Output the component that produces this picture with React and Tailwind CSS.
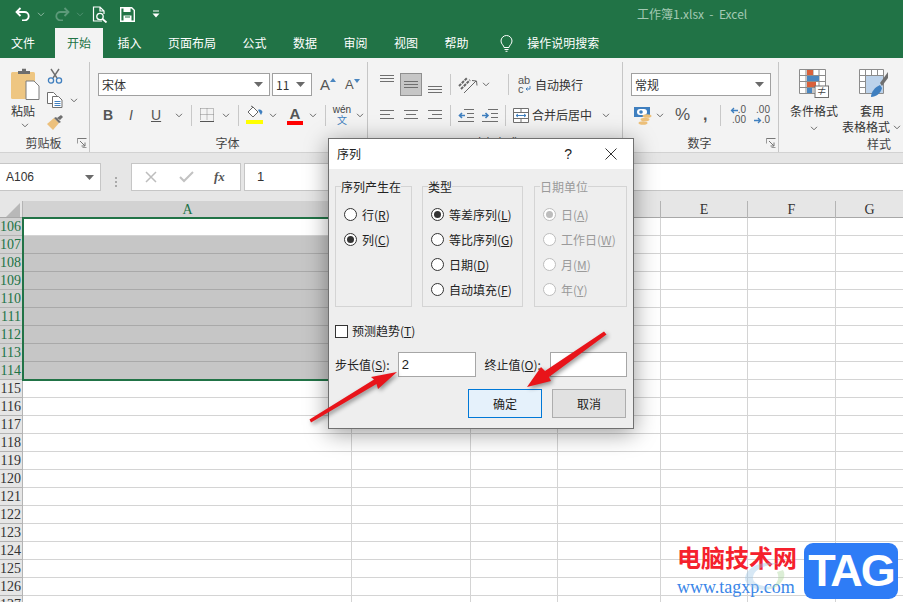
import React from 'react';

const CJK = '"Noto Sans CJK SC", "Noto Sans", sans-serif';

const tabs = ['插入', '页面布局', '公式', '数据', '审阅', '视图', '帮助'];
const rows = Array.from({ length: 22 }, (_, i) => 106 + i);

const Chevron = ({ color = '#6a6a6a' }) => (
  <svg width="8" height="5" viewBox="0 0 8 5" className="shrink-0">
    <path d="M1 .8l3 3 3-3" fill="none" stroke={color} />
  </svg>
);

const Caret = () => (
  <svg width="9" height="5" viewBox="0 0 9 5" className="shrink-0">
    <path d="M0 0h9L4.5 5z" fill="#6a6a6a" />
  </svg>
);

const Sep = () => <div className="h-[21px] w-px shrink-0 bg-[#c8c8c8]" />;

const Launcher = () => (
  <svg width="10" height="10" viewBox="0 0 10 10" className="justify-self-end">
    <path d="M.5 5V.5H9.5M3 3l5 5M8 4.5V8H4.5" fill="none" stroke="#777" />
    <path d="M.5 .5v9h9" fill="none" stroke="#999" strokeDasharray="5 9" />
  </svg>
);

// stacked alignment lines, each entry is [x1, x2, y]
const Lines = ({ w = 15, h = 10, items, color = '#6f6f6f' }) => (
  <svg width={w} height={h} viewBox={`0 0 ${w} ${h}`} className="shrink-0">
    {items.map(([a, b, y]) => (
      <path key={`${a}${y}`} d={`M${a} ${y}H${b}`} stroke={color} />
    ))}
  </svg>
);

const threeEven = [[0, 14, 0.5], [0, 14, 3.5], [0, 14, 6.5]];

const Group = ({ label, launcher, className, children }) => (
  <div className={`flex h-full shrink-0 flex-col border-r border-[#c6c6c6] ${className}`}>
    <div className="flex-1">{children}</div>
    <div className="grid h-[18px] grid-cols-[1fr_auto_1fr] items-center pr-[2px] text-[12px] text-[#444]">
      <span />
      <span>{label}</span>
      {launcher ? <Launcher /> : <span />}
    </div>
  </div>
);

const Combo = ({ className, children }) => (
  <div className={`flex h-[23px] items-center justify-between border border-[#a0a0a0] bg-white px-[3px] pr-[6px] text-[12px] text-[#333] ${className}`}>
    <span>{children}</span>
    <Caret />
  </div>
);

const Radio = ({ label, keyChar, checked, disabled }) => (
  <div className={`flex h-[25px] items-center gap-[5px] text-[12px] ${disabled ? 'text-[#9a9a9a]' : 'text-[#222]'}`}>
    <span className={`flex h-[13px] w-[13px] items-center justify-center rounded-full border bg-white ${disabled ? 'border-[#bdbdbd]' : 'border-[#333]'}`}>
      {checked && <span className={`h-[7px] w-[7px] rounded-full ${disabled ? 'bg-[#bdbdbd]' : 'bg-[#333]'}`} />}
    </span>
    <span>
      {label}(<u>{keyChar}</u>)
    </span>
  </div>
);

const Box = ({ title, disabled, className, children }) => (
  <fieldset className={`h-[129px] shrink-0 border border-[#d4d4d4] pl-[8px] ${className}`}>
    <legend className={`ml-[-3px] px-0 text-[12px] leading-[17px] ${disabled ? 'text-[#9a9a9a]' : 'text-[#222]'}`}>{title}</legend>
    <div className="pt-[7px]">{children}</div>
  </fieldset>
);

const Dialog = () => (
  <div className="absolute left-[328px] top-[138px] z-20 h-[291px] w-[306px] border border-[#707070] bg-[#eeeeee] shadow-[0_4px_22px_rgba(0,0,0,0.4)]">
    <div className="flex h-[30px] items-center justify-between bg-white pl-[8px] pr-[16px] text-[12px] text-[#222]">
      <span>序列</span>
      <div className="flex items-center gap-[33px]">
        <span className="font-['Liberation_Sans'] text-[14px]">?</span>
        <svg width="12" height="12" viewBox="0 0 12 12">
          <path d="M.5 .5l11 11M11.5 .5l-11 11" stroke="#333" fill="none" />
        </svg>
      </div>
    </div>
    <div className="px-[6px] pt-[9px]">
      <div className="flex gap-[10px]">
        <Box title="序列产生在" className="w-[77px]">
          <Radio label="行" keyChar="R" />
          <Radio label="列" keyChar="C" checked />
        </Box>
        <Box title="类型" className="w-[101px]">
          <Radio label="等差序列" keyChar="L" checked />
          <Radio label="等比序列" keyChar="G" />
          <Radio label="日期" keyChar="D" />
          <Radio label="自动填充" keyChar="F" />
        </Box>
        <Box title="日期单位" disabled className="ml-[1px] w-[93px]">
          <Radio label="日" keyChar="A" checked disabled />
          <Radio label="工作日" keyChar="W" disabled />
          <Radio label="月" keyChar="M" disabled />
          <Radio label="年" keyChar="Y" disabled />
        </Box>
      </div>
      <div className="mt-[17px] flex h-[14px] items-center gap-[4px] text-[12px] text-[#222]">
        <span className="h-[13px] w-[13px] border border-[#333] bg-white" />
        <span>
          预测趋势(<u>T</u>)
        </span>
      </div>
      <div className="mt-[14px] flex h-[25px] items-center text-[12px] text-[#222]">
        <span className="w-[63px]">
          步长值(<u>S</u>):
        </span>
        <div className="flex h-[25px] w-[78px] items-center border border-[#a6a6a6] bg-white pl-[3px] font-['Liberation_Sans'] text-[13px]">2</div>
        <span className="ml-[9px] w-[66px]">
          终止值(<u>O</u>):
        </span>
        <div className="h-[25px] w-[77px] border border-[#a6a6a6] bg-white" />
      </div>
      <div className="mt-[12px] flex justify-end gap-[10px] pr-[1px]">
        <button className="h-[29px] w-[74px] border border-[#0078d7] bg-[#e5f1fb] text-[12px] text-[#222]">确定</button>
        <button className="h-[29px] w-[74px] border border-[#adadad] bg-[#e1e1e1] text-[12px] text-[#222]">取消</button>
      </div>
    </div>
  </div>
);

const TitleBar = () => (
  <div className="flex h-[28px] shrink-0 items-center bg-[#217346] pl-[15px]">
    <svg width="16" height="14" viewBox="0 0 16 14" className="shrink-0">
      <path d="M5.5 1L1.5 5l4 4M2 5h7.5a4.2 4.2 0 0 1 0 8.4H7" fill="none" stroke="#fff" strokeWidth="1.8" />
    </svg>
    <div className="ml-[6px]"><Chevron color="#8fb8a2" /></div>
    <svg width="16" height="14" viewBox="0 0 16 14" className="ml-[9px] shrink-0">
      <path d="M10.5 1l4 4-4 4M14 5H6.5a4.2 4.2 0 0 0 0 8.4H9" fill="none" stroke="#5d9a7a" strokeWidth="1.8" />
    </svg>
    <div className="ml-[6px]"><Chevron color="#4f9070" /></div>
    <svg width="16" height="17" viewBox="0 0 16 17" className="ml-[8px] shrink-0">
      <path d="M10 15H1.5V1H8l4 4v3M8 1v4h4" fill="none" stroke="#fff" strokeWidth="1.2" />
      <circle cx="8" cy="10.5" r="3.2" fill="none" stroke="#fff" strokeWidth="1.3" />
      <path d="M10.5 13l4 3.5" stroke="#fff" strokeWidth="1.8" />
    </svg>
    <svg width="15" height="15" viewBox="0 0 15 15" className="ml-[12px] shrink-0">
      <path d="M.7 .7h11l2.6 2.6v11H.7z" fill="none" stroke="#fff" strokeWidth="1.4" />
      <path d="M3.5 1h7v4h-7zM3.5 8.5h8V14h-8z" fill="#fff" />
      <path d="M5 10h5" stroke="#217346" />
    </svg>
    <svg width="8" height="8" viewBox="0 0 8 8" className="ml-[17px] shrink-0">
      <path d="M1 1h6" stroke="#fff" />
      <path d="M.5 3.5h7L4 7.5z" fill="#fff" />
    </svg>
    <span className="ml-[477px] whitespace-pre text-[12px] text-[#a3c9b3]">工作簿1.xlsx  -  Excel</span>
  </div>
);

const TabBar = () => (
  <div className="flex h-[30px] shrink-0 items-stretch gap-[2.5px] bg-[#217346] text-[12px] text-white">
    <div className="flex w-[52.5px] items-center pl-[11px]">文件</div>
    <div className="flex items-center bg-[#f3f3f3] px-[12px] text-[#217346]">开始</div>
    {tabs.map((t) => (
      <div key={t} className="flex items-center px-[12px]">{t}</div>
    ))}
    <div className="ml-[17px] flex items-center gap-[14px]">
      <svg width="13" height="17" viewBox="0 0 13 17" className="shrink-0">
        <path d="M4 12.5c0-2-3-3.3-3-6.5a5.5 5.5 0 0 1 11 0c0 3.2-3 4.5-3 6.5zM4.5 14.5h4M5.5 16.3h2" fill="none" stroke="#fff" />
      </svg>
      <span>操作说明搜索</span>
    </div>
  </div>
);

const ClipboardGroup = () => (
  <Group label="剪贴板" launcher className="w-[90px]">
    <div className="flex pl-[11px] pt-[6px]">
      <div className="flex w-[33px] shrink-0 flex-col">
        <svg width="29" height="32" viewBox="0 0 29 32">
          <rect x="0" y="4" width="24" height="27" rx="1.5" fill="#eec682" />
          <path d="M7 6V3h4V0.8h4V3h4v3z" fill="#6e6e6e" />
          <path d="M15 13h8l5 5v13.5H15z" fill="#fff" stroke="#7c7c7c" />
        </svg>
        <span className="mt-[2px] text-[12px] text-[#333]">粘贴</span>
        <div className="ml-[10px] mt-[3px]"><Chevron /></div>
      </div>
      <div className="ml-[3px] flex flex-col">
        <svg width="16" height="16" viewBox="0 0 16 16">
          <path d="M4 1l6 9M12 1l-6 9" stroke="#6f6f6f" strokeWidth="1.4" fill="none" />
          <circle cx="4" cy="12.5" r="2.6" fill="none" stroke="#3f7fbf" strokeWidth="1.3" />
          <circle cx="12" cy="12.5" r="2.6" fill="none" stroke="#3f7fbf" strokeWidth="1.3" />
        </svg>
        <div className="mt-[8px] flex items-center gap-[7px]">
          <svg width="16" height="16" viewBox="0 0 16 16">
            <path d="M.5 .5h6l3 3v8h-9z" fill="#fff" stroke="#6f6f6f" />
            <path d="M5.5 4.5h6l3.5 3.5v7.5H5.5z" fill="#fff" stroke="#6f6f6f" />
            <path d="M7.5 9.5h6M7.5 11.5h6M7.5 13.5h6" stroke="#3f7fbf" />
          </svg>
          <Chevron />
        </div>
        <svg width="16" height="15" viewBox="0 0 16 15" className="mt-[7px]">
          <path d="M0 9l7-6 5 5-6 7z" fill="#ecc07c" />
          <path d="M7 3l2-1 5 5-2 1zM10 3l4-3 2 2-3 3z" fill="#6f6f6f" />
        </svg>
      </div>
    </div>
  </Group>
);

const FontGroup = () => (
  <Group label="字体" className="w-[278px]">
    <div className="pl-[8px] pt-[11px]">
      <div className="flex items-center">
        <Combo className="w-[172px]">宋体</Combo>
        <Combo className="ml-[2px] w-[40px]">11</Combo>
        <div className="ml-[8px] flex w-[15px] items-start font-['Liberation_Sans'] text-[15px] leading-none text-[#555]">
          A
          <svg width="6" height="4" viewBox="0 0 6 4" className="mt-[1px] shrink-0"><path d="M0 4h6L3 0z" fill="#4a86c0" /></svg>
        </div>
        <div className="ml-[10px] flex w-[15px] items-start font-['Liberation_Sans'] text-[13px] leading-none text-[#555]">
          A
          <svg width="6" height="4" viewBox="0 0 6 4" className="mt-[1px] shrink-0"><path d="M0 0h6L3 4z" fill="#4a86c0" /></svg>
        </div>
      </div>
      <div className="mt-[8px] flex h-[22px] items-center font-['Liberation_Sans'] text-[14px] text-[#555]">
        <span className="ml-[5px] w-[24px] font-bold">B</span>
        <span className="w-[24px] pl-[2px] italic">I</span>
        <span className="w-[24px] underline">U</span>
        <Chevron />
        <div className="ml-[8px]"><Sep /></div>
        <svg width="14" height="14" viewBox="0 0 14 14" className="ml-[8px] shrink-0">
          <path d="M.5 .5h13v12M.5 .5v12M7 .5v12M.5 6.5h13" fill="none" stroke="#888" strokeDasharray="1 1" />
          <path d="M0 13.5h14" stroke="#555" />
        </svg>
        <div className="ml-[8px]"><Chevron /></div>
        <div className="ml-[8px]"><Sep /></div>
        <svg width="17" height="20" viewBox="0 0 17 20" className="ml-[7px] shrink-0">
          <path d="M2 7l5-5 5 5-5 5z" fill="#fff" stroke="#666" />
          <path d="M5 1l2 1" stroke="#666" />
          <path d="M12 5c2-1 4 0 4.5 2L15 10c-1-2-2-3-3-5z" fill="#3f7fbf" />
          <rect x="0" y="15" width="17" height="4" fill="#ffff00" />
        </svg>
        <div className="ml-[6px]"><Chevron /></div>
        <div className="ml-[10px] flex w-[16px] flex-col items-center">
          <span className="text-[15px] font-bold leading-[15px]">A</span>
          <span className="h-[4px] w-[16px] bg-[#ff0000]" />
        </div>
        <div className="ml-[6px]"><Chevron /></div>
        <div className="ml-[8px]"><Sep /></div>
        <div className="ml-[8px] flex w-[16px] flex-col items-center text-[10px] leading-[10px] text-[#444]">
          <span>wén</span>
          <span className="text-[#3f7fbf]" style={{ fontFamily: CJK }}>文</span>
        </div>
        <div className="ml-[6px]"><Chevron /></div>
      </div>
    </div>
  </Group>
);

const AlignGroup = () => (
  <Group label="对齐方式" className="w-[255px]">
    <div className="pl-[12px] pt-[11px]">
      <div className="flex h-[23px] items-center">
        <div className="mb-[11px]"><Lines w={15} h={8} items={threeEven} /></div>
        <div className="ml-[5px] flex h-[23px] w-[22px] items-center justify-center border border-[#8f8f8f] bg-[#c6c6c6]">
          <Lines w={15} h={8} items={threeEven} />
        </div>
        <div className="ml-[6px] mt-[11px]"><Lines w={15} h={8} items={threeEven} /></div>
        <div className="ml-[7px]"><Sep /></div>
        <svg width="20" height="20" viewBox="0 0 20 20" className="ml-[7px] shrink-0">
          <path d="M1 11l8-8M3 14l9-9" stroke="#666" strokeWidth="2" fill="none" strokeDasharray="3 1" />
          <path d="M6 18L18 6M14 5.5l4.5.5.5 4.5" stroke="#666" fill="none" />
        </svg>
        <div className="ml-[4px]"><Chevron /></div>
        <div className="ml-[18px]"><Sep /></div>
        <div className="ml-[9px] flex w-[13px] flex-col font-['Liberation_Sans'] text-[11px] leading-[9px] text-[#555]">
          <span>ab</span>
          <span className="flex items-center">
            c
            <svg width="6" height="6" viewBox="0 0 6 6" className="ml-[1px]"><path d="M5 0v3H1M2.5 1.5L1 3l1.5 1.5" fill="none" stroke="#3f7fbf" /></svg>
          </span>
        </div>
        <span className="ml-[4px] text-[12px] text-[#333]">自动换行</span>
      </div>
      <div className="mt-[8px] flex h-[22px] items-center">
        <Lines w={15} h={10} items={[[0, 14, 0.5], [0, 10, 4.5], [0, 14, 8.5]]} />
        <div className="ml-[9px]"><Lines w={15} h={10} items={[[0, 14, 0.5], [2, 12, 4.5], [0, 14, 8.5]]} /></div>
        <div className="ml-[9px]"><Lines w={15} h={10} items={[[0, 14, 0.5], [4, 14, 4.5], [0, 14, 8.5]]} /></div>
        <div className="ml-[7px]"><Sep /></div>
        <svg width="16" height="13" viewBox="0 0 16 13" className="ml-[7px] shrink-0">
          <path d="M6 .5h10M9 4.5h7M9 8.5h7M0 12.5h16" stroke="#6f6f6f" />
          <path d="M7 6.5H2M4 4L1.5 6.5 4 9" fill="none" stroke="#3f7fbf" strokeWidth="1.6" />
        </svg>
        <svg width="16" height="13" viewBox="0 0 16 13" className="ml-[8px] shrink-0">
          <path d="M6 .5h10M9 4.5h7M9 8.5h7M0 12.5h16" stroke="#6f6f6f" />
          <path d="M0 6.5h5M3.5 4L6 6.5 3.5 9" fill="none" stroke="#3f7fbf" strokeWidth="1.6" />
        </svg>
        <div className="ml-[7px]"><Sep /></div>
        <svg width="16" height="15" viewBox="0 0 16 15" className="ml-[7px] shrink-0">
          <path d="M.5 .5h15v14H.5zM.5 4.5h15M.5 10.5h15M8 .5v4M8 10.5v4" fill="#fff" stroke="#6f6f6f" />
          <path d="M3 7.5h10M5 6l-2 1.5L5 9M11 6l2 1.5L11 9" fill="none" stroke="#3f7fbf" />
        </svg>
        <span className="ml-[3px] text-[12px] text-[#333]">合并后居中</span>
        <div className="ml-[10px]"><Chevron /></div>
      </div>
    </div>
  </Group>
);

const NumberGroup = () => (
  <Group label="数字" launcher className="w-[156px]">
    <div className="pl-[8px] pt-[11px]">
      <Combo className="w-[140px]">常规</Combo>
      <div className="mt-[8px] flex h-[22px] items-center text-[#555]">
        <svg width="18" height="19" viewBox="0 0 18 19" className="ml-[3px] shrink-0">
          <rect x="0" y="1" width="16" height="10" fill="#3f7fbf" />
          <rect x="3" y="3" width="10" height="6" rx="3" fill="#fff" />
          <circle cx="7" cy="6" r="1.8" fill="#3f7fbf" />
          <ellipse cx="13" cy="10" rx="4.5" ry="1.8" fill="#edc07a" />
          <ellipse cx="11" cy="13.5" rx="4.5" ry="1.8" fill="#edc07a" />
          <ellipse cx="9" cy="17" rx="4.5" ry="1.8" fill="#edc07a" />
        </svg>
        <div className="ml-[4px]"><Chevron /></div>
        <span className="ml-[11px] w-[28px] font-['Liberation_Sans'] text-[17px]">%</span>
        <span className="w-[17px] font-['Liberation_Sans'] text-[16px] font-bold leading-none">,</span>
        <Sep />
        <div className="ml-[7px] flex w-[18px] flex-col items-end font-['Liberation_Sans'] text-[10px] leading-[10px] text-[#555]">
          <span className="flex items-center">
            <svg width="8" height="7" viewBox="0 0 8 7"><path d="M8 3.5H2M4 1L1.5 3.5 4 6" fill="none" stroke="#3f7fbf" strokeWidth="1.3" /></svg>
            .0
          </span>
          <span>.00</span>
        </div>
        <div className="ml-[7px] flex w-[17px] flex-col items-end font-['Liberation_Sans'] text-[10px] leading-[10px] text-[#555]">
          <span>.00</span>
          <span className="flex items-center">
            <svg width="8" height="7" viewBox="0 0 8 7"><path d="M0 3.5h6M4 1l2.5 2.5L4 6" fill="none" stroke="#3f7fbf" strokeWidth="1.3" /></svg>
            .0
          </span>
        </div>
      </div>
    </div>
  </Group>
);

const StylesGroup = () => (
  <div className="flex h-full flex-1 flex-col">
    <div className="flex flex-1 pt-[7px] text-[12px] leading-[16px] text-[#333]">
      <div className="ml-[10px] flex w-[50px] flex-col items-center">
        <svg width="30" height="29" viewBox="0 0 30 29">
          <path d="M.5 .5h26v24H.5zM.5 6.5h26M.5 12.5h26M.5 18.5h26M7 .5v24M14 .5v24M20 .5v24" fill="#fff" stroke="#8c8c8c" />
          <rect x="8" y="1" width="6" height="5" fill="#d9603a" />
          <rect x="8" y="7" width="12" height="5" fill="#4a86c0" />
          <rect x="8" y="13" width="9" height="5" fill="#d9603a" />
          <rect x="8" y="19" width="5" height="5" fill="#4a86c0" />
          <rect x="16" y="17" width="13.5" height="11.5" fill="#fff" stroke="#6f6f6f" />
          <text x="22.7" y="26" fontSize="10" textAnchor="middle" fill="#444">≠</text>
        </svg>
        <span className="mt-[5px]">条件格式</span>
        <div className="mt-[7px]"><Chevron /></div>
      </div>
      <div className="ml-[3px] flex w-[52px] flex-col">
        <svg width="30" height="29" viewBox="0 0 30 29" className="ml-[17px] shrink-0">
          <path d="M.5 .5h24v24H.5zM.5 6.5h24M.5 12.5h24M.5 18.5h24M6.5 .5v24M12.5 .5v24M18.5 .5v24" fill="#fff" stroke="#8c8c8c" />
          <rect x="7" y="7" width="17" height="17" fill="#bcd2ea" />
          <path d="M21 14l8-11v6l-6 8z" fill="#6f6f6f" />
          <path d="M12 28c0-5 4-10 9-12l2 3c-1 5-6 9-11 9z" fill="#3f7fbf" />
        </svg>
        <span className="ml-[18px] mt-[5px] whitespace-nowrap">套用</span>
        <div className="flex items-center gap-[3px] whitespace-nowrap">
          <span>表格格式</span>
          <Chevron />
        </div>
      </div>
    </div>
    <div className="h-[18px] pl-[88px] text-[12px] leading-[18px] text-[#444]">样式</div>
  </div>
);

const FormulaBar = () => (
  <div className="flex h-[48px] shrink-0 bg-[#e6e6e6] pt-[10px]">
    <div className="flex h-[28px] w-[101px] items-center justify-between border border-l-0 border-[#c6c6c6] bg-white pl-[6px] pr-[6px] font-['Liberation_Sans'] text-[12px] text-[#333]">
      A106
      <Caret />
    </div>
    <div className="flex w-[30px] flex-col items-center justify-center gap-[2px]">
      <span className="h-[2px] w-[2px] bg-[#aaa]" />
      <span className="h-[2px] w-[2px] bg-[#aaa]" />
      <span className="h-[2px] w-[2px] bg-[#aaa]" />
    </div>
    <div className="flex h-[28px] w-[110px] items-center border border-[#c6c6c6] bg-white">
      <svg width="12" height="12" viewBox="0 0 12 12" className="ml-[13px]"><path d="M1 1l10 10M11 1L1 11" stroke="#bdbdbd" strokeWidth="1.5" /></svg>
      <svg width="15" height="12" viewBox="0 0 15 12" className="ml-[22px]"><path d="M1 6l4 4 9-9" fill="none" stroke="#c2c2c2" strokeWidth="2" /></svg>
      <span className="ml-[20px] font-['Liberation_Serif'] text-[13px] font-bold italic text-[#555]">fx</span>
    </div>
    <div className="ml-[3px] flex h-[28px] flex-1 items-center border border-r-0 border-[#c6c6c6] bg-white pl-[12px] font-['Liberation_Sans'] text-[13px] text-[#333]">1</div>
  </div>
);

const COLS = 'grid grid-cols-[23px_329px_119px_87px_103px_87px_88px_1fr]';
const otherCols = [0, 1, 2, 3, 4, 5];

const Sheet = () => (
  <div className="relative flex-1 overflow-hidden bg-white font-['Liberation_Serif'] text-[14px]">
    <div className={`${COLS} h-[17px] border-b border-[#a8a8a8] bg-[#e6e6e6] leading-[17px] text-[#333]`}>
      <div className="flex items-end justify-end border-r border-[#b4b4b4] pb-[1px] pr-[2px]">
        <svg width="14" height="14" viewBox="0 0 14 14"><path d="M14 0v14H0z" fill="#b8b8b8" /></svg>
      </div>
      <div className="bg-[#d2d2d2] text-center text-[#217346]">A</div>
      {['B', 'C', 'D', 'E', 'F', 'G'].map((c) => (
        <div key={c} className="border-r border-[#b4b4b4] text-center last:border-r-0">{c}</div>
      ))}
    </div>
    {rows.map((r) => {
      const selected = r <= 114;
      const filled = selected && r > 106;
      return (
        <div key={r} className={`${COLS} h-[18px]`}>
          <div className={`flex items-center justify-end overflow-hidden whitespace-nowrap border-b border-r border-[#b4b4b4] pr-[1px] leading-none ${selected ? 'bg-[#d2d2d2] text-[#217346]' : 'bg-[#e6e6e6] text-[#333]'}`}>
            <span className="shrink-0">{r}</span>
          </div>
          <div className={`border-b border-r ${filled ? 'border-[#a9a9a9] bg-[#c6c6c6]' : 'border-[#d4d4d4]'}`} />
          {otherCols.map((c) => (
            <div key={c} className="border-b border-r border-[#d4d4d4] last:border-r-0" />
          ))}
        </div>
      );
    })}
    {/* selection outline over A106:A114 */}
    <div className="pointer-events-none absolute left-[22px] top-[16px] h-[164px] w-[332px] border-2 border-[#217346]" />
  </div>
);

const Arrows = () => (
  <svg viewBox="0 0 903 602" className="pointer-events-none absolute inset-0 z-30 h-[602px] w-[903px] drop-shadow-[2px_2px_2px_rgba(0,0,0,0.4)]">
    <polygon points="309.5,419.5 374,379.5 371,377 397,372 378,389 376.5,384 311,422.5" fill="#e8141a" />
    <polygon points="604,331.5 606.5,334.5 549,377 551,381 527,387 541,367 545,371" fill="#e8141a" />
  </svg>
);

const Watermark = () => (
  <div className="pointer-events-none absolute left-[677px] top-[540px] z-30 flex h-[60px] w-[222px]">
    <div className="flex w-[127px] flex-col">
      <span className="mt-[2px] whitespace-nowrap text-[24px] font-bold leading-[30px] text-[#f5212d]">电脑技术网</span>
      <span className="mt-[5px] whitespace-nowrap font-['Liberation_Serif'] text-[18px] leading-[20px] text-[#3a86e8]">www.tagxp.com</span>
    </div>
    <div className="mt-[3px] flex h-[56px] w-[94px] items-center justify-center rounded-[9px] bg-[#2e7cf6] font-['Liberation_Sans'] text-[45px] font-bold tracking-[-2px] text-white">
      TAG
    </div>
    <svg width="46" height="36" viewBox="0 0 46 36" className="absolute left-[66px] top-[18px] opacity-40">
      <path d="M2 20C4 8 20 2 36 6 22 6 10 12 10 20c0 6 10 10 24 8-10 7-32 4-32-8z" fill="#9cc7e8" />
      <path d="M40 12c5 8-4 18-16 20 8-4 14-10 10-18z" fill="#a9d69a" />
    </svg>
  </div>
);

const App = () => (
  <div className="relative flex h-[602px] w-[903px] flex-col overflow-hidden bg-white" style={{ fontFamily: CJK }}>
    <TitleBar />
    <TabBar />
    <div className="flex h-[95px] shrink-0 border-b border-[#d2d2d2] bg-[#f3f3f3] pt-[4px]">
      <ClipboardGroup />
      <FontGroup />
      <AlignGroup />
      <NumberGroup />
      <StylesGroup />
    </div>
    <FormulaBar />
    <Sheet />
    <Dialog />
    <Arrows />
    <Watermark />
  </div>
);

export default App;
